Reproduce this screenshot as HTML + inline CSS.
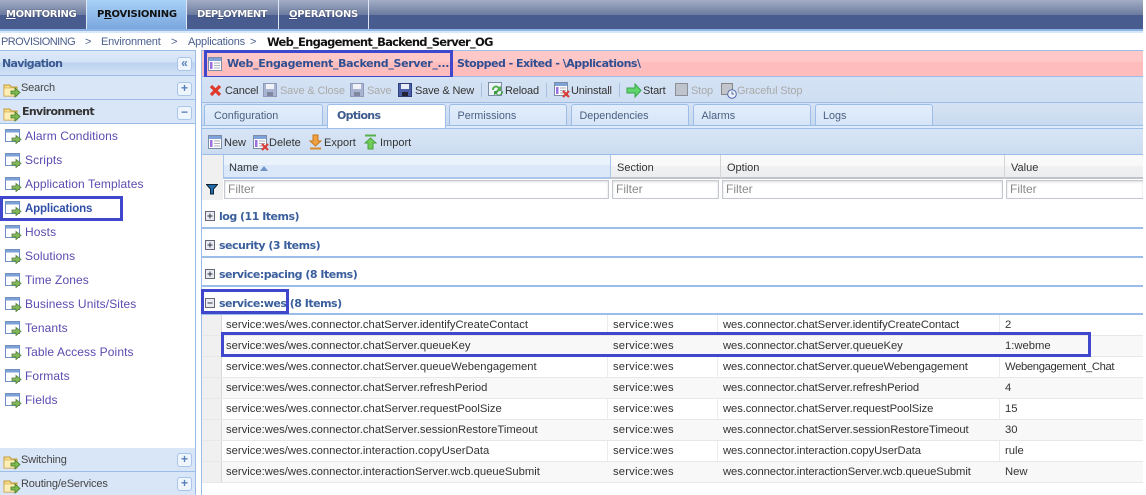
<!DOCTYPE html>
<html><head><meta charset="utf-8"><style>
html,body{margin:0;padding:0;background:#fff}
#p{position:relative;width:1146px;height:495px;overflow:hidden;background:#fff;font:11px "Liberation Sans",sans-serif;color:#333}
#p div,#p span.a,#p svg{position:absolute}
.t{white-space:nowrap;line-height:14px}
.nt{font:bold 10px/14px "DejaVu Sans",sans-serif;color:#fff;top:8px;white-space:nowrap;letter-spacing:-.35px;text-shadow:0 0 1px #223}
.tb{font-size:11px;letter-spacing:-.15px;color:#333;white-space:nowrap;line-height:14px;top:84px}
.dis{color:#aaa}
.bc{top:35px;font-size:11px;color:#4a5f8c;letter-spacing:-.2px}
.tab{top:104px;height:21px;width:118px;box-sizing:border-box;border:1px solid #9cbde8;border-bottom:0;border-radius:3px 3px 0 0;background:linear-gradient(#e3eefb,#d6e5f8);color:#4a6080;padding:4px 0 0 7.500px;line-height:14px;font-size:10.800px}
.hd{top:161px;line-height:14px;font-size:11px;color:#333}
.f{top:180px;height:19px;box-sizing:border-box;border:1px solid #c4c8d0;background:#fff;color:#888;font-size:12px;line-height:17px;padding-left:3px;box-shadow:inset 0 1px 2px #ddd}
.g{left:219px;font:bold 11px/14px "DejaVu Sans",sans-serif;color:#3a5f9c;white-space:nowrap;letter-spacing:-.5px}
.gl{left:202px;width:941px;height:2px;background:#9cbde8}
.pm{left:205px;width:10px;height:10px}
.r{left:202px;width:941px;height:1px;background:#e8e8e8}
.c{white-space:nowrap;line-height:14px;font-size:11.25px;color:#333}
.c[style*="left:723px"]{letter-spacing:-.09px}
.c[style*="left:613px"]{letter-spacing:.18px}
.nv{left:25px;font-size:12px;letter-spacing:.1px;line-height:14px;color:#5a4bb0;white-space:nowrap}
.bx{border:3px solid #3f48cc;box-sizing:border-box}
.btn{left:177px;width:13px;height:12px;border:1px solid #a9c5ea;border-radius:3px;background:#eef5fd;color:#5a80b8;font:bold 12px/11px "Liberation Sans",sans-serif;text-align:center}
.fo{left:3px;width:18px;height:17px}
.wi{left:5px;width:17px;height:15px}
.n2{font-size:11px;letter-spacing:-.15px;color:#444}
</style></head><body><div id="p">
<svg width="0" height="0" style="left:0;top:0"><defs>
<symbol id="fol" viewBox="0 0 18 17"><path d="M1 3h6l1 2h6v9H1z" fill="#f7dc8a" stroke="#c49a3a"/><path d="M1 6h13v8H1z" fill="#fdeeb5" stroke="#c49a3a" stroke-width=".6"/><path d="M8 9h4V6l5 4.500-5 4.500v-3H8z" fill="#7db850" stroke="#3f7d25" stroke-width=".8"/></symbol>
<symbol id="win" viewBox="0 0 17 15"><rect x=".5" y=".5" width="14" height="12" fill="#fff" stroke="#6d8fc4"/><rect x="1" y="1" width="13" height="2.5" fill="#7ea2d8"/><path d="M7 9h4V6.500L16 10.500l-5 4V12H7z" fill="#86b85f" stroke="#4c7f2e" stroke-width=".8"/></symbol>
<symbol id="doc" viewBox="0 0 14 14"><rect x=".5" y=".5" width="13" height="13" fill="#fff" stroke="#7a8ca8"/><rect x="1" y="1" width="12" height="3" fill="#7ea2d8"/><rect x="2" y="5" width="2.500" height="7" fill="#9a6fe0"/><path d="M6 6h6M6 8.500h6M6 11h6" stroke="#aab" /></symbol>
<symbol id="sav" viewBox="0 0 14 14"><path d="M.5.5h13v13H.5z" fill="#4a5fa8" stroke="#2f3f78"/><rect x="3" y="1" width="8" height="5" fill="#e8edf8"/><rect x="4" y="9" width="6" height="4" fill="#223"/></symbol>
<symbol id="savd" viewBox="0 0 14 14"><path d="M.5.5h13v13H.5z" fill="#a9b4d2" stroke="#8f9abb"/><rect x="3" y="1" width="8" height="5" fill="#f0f2f8"/><rect x="4" y="9" width="6" height="4" fill="#8088a0"/></symbol>
<symbol id="pl" viewBox="0 0 10 10"><rect x=".5" y=".5" width="9" height="9" fill="#e8ecf2" stroke="#667"/><path d="M2.500 5h5M5 2.500v5" stroke="#334"/></symbol>
<symbol id="mi" viewBox="0 0 10 10"><rect x=".5" y=".5" width="9" height="9" fill="#e8ecf2" stroke="#667"/><path d="M2.500 5h5" stroke="#334"/></symbol>
</defs></svg>

<!-- top bar -->
<div style="left:0;top:0;width:1143px;height:15px;background:linear-gradient(#a3adc4,#6b7a9f)"></div>
<div style="left:0;top:15px;width:1143px;height:14px;background:#485c90"></div>
<div style="left:0;top:29px;width:1143px;height:2px;background:#8fb4e6"></div>
<div style="left:0;top:31px;width:1143px;height:2px;background:#d8e8fb"></div>
<div style="left:87px;top:0;width:99px;height:29px;background:linear-gradient(#a9d2f8,#79a6dd)"></div>
<div style="left:86px;top:0;width:1px;height:29px;background:#dfe7f5"></div>
<div style="left:186px;top:0;width:1px;height:29px;background:#dfe7f5"></div>
<div style="left:278px;top:0;width:1px;height:29px;background:#dfe7f5"></div>
<div style="left:368px;top:0;width:1px;height:29px;background:#dfe7f5"></div>
<div class="nt" style="left:6px"><u>M</u>ONITORING</div>
<div class="nt" style="left:97px;color:#111;text-shadow:none;letter-spacing:-.25px">P<u>R</u>OVISIONING</div>
<div class="nt" style="left:197px;letter-spacing:-.6px">DEP<u>L</u>OYMENT</div>
<div class="nt" style="left:289px;letter-spacing:-.3px"><u>O</u>PERATIONS</div>

<!-- breadcrumb -->
<div class="t bc" style="left:1px;letter-spacing:-.55px">PROVISIONING</div>
<div class="t bc" style="left:85px">&gt;</div>
<div class="t bc" style="left:101px">Environment</div>
<div class="t bc" style="left:171px">&gt;</div>
<div class="t bc" style="left:188px">Applications</div>
<div class="t bc" style="left:250px">&gt;</div>
<div class="t" style="left:267px;top:35px;font:bold 11.500px/14px 'DejaVu Sans',sans-serif;color:#111;letter-spacing:-.75px">Web_Engagement_Backend_Server_OG</div>

<!-- nav -->
<div style="left:0;top:50px;width:196px;height:1px;background:#9cbde8"></div>
<div style="left:0;top:51px;width:195px;height:24px;background:linear-gradient(#dde9f9 0,#d4e3f7 45%,#bcd2f0 50%,#d3e2f6 100%)"></div>
<div class="t" style="left:2px;top:57px;font:bold 11px/14px 'DejaVu Sans',sans-serif;color:#3a5a90;letter-spacing:-.7px">Navigation</div>
<div class="btn" style="top:57px">«</div>
<div style="left:0;top:75px;width:195px;height:1px;background:#9cbde8"></div>
<div style="left:0;top:76px;width:195px;height:23px;background:#d9e6f7"></div>
<svg class="fo" style="top:82px"><use href="#fol"/></svg>
<div class="t n2" style="left:21px;top:81px">Search</div>
<div class="btn" style="top:82px">+</div>
<div style="left:0;top:99px;width:195px;height:1px;background:#9cbde8"></div>
<div style="left:0;top:100px;width:195px;height:23px;background:#d9e6f7"></div>
<svg class="fo" style="top:106px"><use href="#fol"/></svg>
<div class="t" style="left:22px;top:105px;font:bold 11px/14px 'DejaVu Sans',sans-serif;color:#333;letter-spacing:-.65px">Environment</div>
<div class="btn" style="top:106px">−</div>
<div style="left:0;top:123px;width:195px;height:1px;background:#9cbde8"></div>

<svg class="wi" style="top:129px"><use href="#win"/></svg><div class="nv" style="top:129px">Alarm Conditions</div>
<svg class="wi" style="top:153px"><use href="#win"/></svg><div class="nv" style="top:153px">Scripts</div>
<svg class="wi" style="top:177px"><use href="#win"/></svg><div class="nv" style="top:177px">Application Templates</div>
<svg class="wi" style="top:201px"><use href="#win"/></svg><div class="nv" style="top:202px;font-weight:bold;color:#2f4fa8;font-size:11.500px;letter-spacing:-.15px">Applications</div>
<svg class="wi" style="top:225px"><use href="#win"/></svg><div class="nv" style="top:225px">Hosts</div>
<svg class="wi" style="top:249px"><use href="#win"/></svg><div class="nv" style="top:249px">Solutions</div>
<svg class="wi" style="top:273px"><use href="#win"/></svg><div class="nv" style="top:273px">Time Zones</div>
<svg class="wi" style="top:297px"><use href="#win"/></svg><div class="nv" style="top:297px">Business Units/Sites</div>
<svg class="wi" style="top:321px"><use href="#win"/></svg><div class="nv" style="top:321px">Tenants</div>
<svg class="wi" style="top:345px"><use href="#win"/></svg><div class="nv" style="top:345px">Table Access Points</div>
<svg class="wi" style="top:369px"><use href="#win"/></svg><div class="nv" style="top:369px">Formats</div>
<svg class="wi" style="top:393px"><use href="#win"/></svg><div class="nv" style="top:393px">Fields</div>
<div class="bx" style="left:0;top:196px;width:123px;height:25px"></div>

<div style="left:0;top:448px;width:195px;height:23px;background:#d9e6f7"></div>
<svg class="fo" style="top:454px"><use href="#fol"/></svg>
<div class="t n2" style="left:21px;top:453px">Switching</div>
<div class="btn" style="top:453px">+</div>
<div style="left:0;top:471px;width:195px;height:1px;background:#9cbde8"></div>
<div style="left:0;top:472px;width:195px;height:23px;background:#d9e6f7"></div>
<svg class="fo" style="top:478px"><use href="#fol"/></svg>
<div class="t n2" style="left:21px;top:477px">Routing/eServices</div>
<div class="btn" style="top:477px">+</div>
<div style="left:195px;top:50px;width:1px;height:445px;background:#9cbde8"></div>
<div style="left:201px;top:50px;width:1px;height:445px;background:#9cbde8"></div>

<!-- title bar -->
<div style="left:202px;top:50px;width:941px;height:1px;background:#9cbde8"></div>
<div style="left:202px;top:51px;width:941px;height:11px;background:#ffc8c8"></div>
<div style="left:202px;top:62px;width:941px;height:14px;background:#ffbcbc"></div>
<div style="left:202px;top:76px;width:941px;height:1px;background:#9cbde8"></div>
<svg style="left:208px;top:57px" width="14" height="14"><use href="#doc"/></svg>
<div class="t" style="left:227px;top:57px;font:bold 11px/14px 'DejaVu Sans',sans-serif;color:#2f4f92;letter-spacing:-.33px">Web_Engagement_Backend_Server_...</div>
<div class="t" style="left:457px;top:57px;font:bold 11px/14px 'DejaVu Sans',sans-serif;color:#2f4f92;letter-spacing:-.5px">Stopped - Exited - \Applications\</div>
<div class="bx" style="left:204px;top:50px;width:249px;height:29px"></div>

<!-- toolbar -->
<div style="left:202px;top:77px;width:941px;height:25px;background:linear-gradient(#d4e2f4,#cfdef1)"></div>
<div style="left:202px;top:102px;width:941px;height:1px;background:#9cbde8"></div>
<svg style="left:209px;top:84px" width="13" height="13"><path d="M2 2l9 9M11 2l-9 9" stroke="#e03a2a" stroke-width="3.200"/></svg>
<div class="tb" style="left:225px">Cancel</div>
<svg style="left:263px;top:83px" width="14" height="14"><use href="#savd"/></svg>
<div class="tb dis" style="left:280px">Save &amp; Close</div>
<svg style="left:350px;top:83px" width="14" height="14"><use href="#savd"/></svg>
<div class="tb dis" style="left:367px">Save</div>
<svg style="left:398px;top:83px" width="14" height="14"><use href="#sav"/></svg>
<div class="tb" style="left:415px">Save &amp; New</div>
<div style="left:481px;top:83px;width:1px;height:14px;background:#a8c0e0"></div>
<svg style="left:488px;top:82px" width="16" height="15"><rect x=".5" y=".5" width="13" height="13" fill="#eef3fb" stroke="#7a8ca8"/><path d="M4 8a4 4 0 0 1 7-3l2-1v5H8l2-2a2 2 0 0 0-4 1z" fill="#4fae4a"/><path d="M15 9a4 4 0 0 1-7 3l-2 1V9h5l-2 2a2 2 0 0 0 4-1z" fill="#3f9a3f"/></svg>
<div class="tb" style="left:505px">Reload</div>
<div style="left:546px;top:83px;width:1px;height:14px;background:#a8c0e0"></div>
<svg style="left:554px;top:82px" width="16" height="16"><use href="#doc" width="14" height="14"/><path d="M9 9l6 6M15 9l-6 6" stroke="#d8403a" stroke-width="2.200"/></svg>
<div class="tb" style="left:571px">Uninstall</div>
<div style="left:619px;top:83px;width:1px;height:14px;background:#a8c0e0"></div>
<svg style="left:626px;top:83px" width="16" height="15"><path d="M1 5h8V1l6 6.500-6 6.500v-4H1z" fill="#62d46c" stroke="#36a648"/></svg>
<div class="tb" style="left:643px">Start</div>
<svg style="left:675px;top:83px" width="13" height="13"><rect x=".5" y=".5" width="12" height="12" fill="#bfc4cc" stroke="#8a8f98"/></svg>
<div class="tb dis" style="left:691px">Stop</div>
<svg style="left:721px;top:83px" width="16" height="16"><rect x=".5" y=".5" width="11" height="11" fill="#c2c6cc" stroke="#888"/><circle cx="11" cy="11" r="4.300" fill="#eef2fa" stroke="#5468a8"/><path d="M11 8.500V11h2" stroke="#5468a8" fill="none"/></svg>
<div class="tb dis" style="left:737px">Graceful Stop</div>

<!-- tabs -->
<div style="left:202px;top:103px;width:941px;height:22px;background:linear-gradient(#d6e3f4,#c9daef)"></div>
<div style="left:202px;top:125px;width:941px;height:1px;background:#9cbde8"></div>
<div style="left:202px;top:126px;width:941px;height:2px;background:#dfeafa"></div>
<div style="left:202px;top:128px;width:941px;height:1px;background:#9cbde8"></div>
<div class="tab" style="left:204px;width:119px;padding-left:9px">Configuration</div>
<div class="tab" style="left:327px;width:119px;height:24px;background:#fff;color:#3d5a8a;padding-left:9px;font:bold 11px/14px 'DejaVu Sans',sans-serif;letter-spacing:-.7px">Options</div>
<div class="tab" style="left:449px">Permissions</div>
<div class="tab" style="left:571px">Dependencies</div>
<div class="tab" style="left:693px">Alarms</div>
<div class="tab" style="left:815px;padding-left:7px">Logs</div>

<!-- toolbar 2 -->
<div style="left:202px;top:129px;width:941px;height:25px;background:linear-gradient(#d8e5f6,#ccdcf0)"></div>
<div style="left:202px;top:154px;width:941px;height:1px;background:#9cbde8"></div>
<svg style="left:208px;top:135px" width="14" height="14"><use href="#doc"/></svg>
<div class="t" style="left:224px;top:136px;color:#333">New</div>
<svg style="left:253px;top:135px" width="16" height="16"><use href="#doc" width="14" height="14"/><path d="M9 9l6 6M15 9l-6 6" stroke="#d8403a" stroke-width="2.200"/></svg>
<div class="t" style="left:269px;top:136px;color:#333">Delete</div>
<svg style="left:309px;top:134px" width="13" height="16"><path d="M4 1h5v6h3l-5.500 5L1 7h3z" fill="#f0a040" stroke="#c87818"/><path d="M1 14.500h11" stroke="#d88a28" stroke-width="2"/></svg>
<div class="t" style="left:324px;top:136px;color:#333">Export</div>
<svg style="left:364px;top:134px" width="13" height="16"><path d="M1 1.500h11" stroke="#5ab04a" stroke-width="2"/><path d="M4 15h5V9h3L6.500 4 1 9h3z" fill="#72cc58" stroke="#46a040"/></svg>
<div class="t" style="left:380px;top:136px;color:#333">Import</div>

<!-- grid header -->
<div style="left:202px;top:155px;width:941px;height:11px;background:#f9f9f9"></div>
<div style="left:202px;top:166px;width:941px;height:11px;background:linear-gradient(#f0f1f3,#ecedef)"></div>
<div style="left:202px;top:177px;width:941px;height:2px;background:#c0c3c8"></div>
<div style="left:202px;top:155px;width:21px;height:24px;background:#f0f0f0"></div>
<div style="left:223px;top:155px;width:388px;height:10px;background:#eaf2fc"></div>
<div style="left:223px;top:165px;width:388px;height:12px;background:#dae8f9"></div>
<div style="left:223px;top:177px;width:388px;height:2px;background:#a9c5ea"></div>
<div style="left:223px;top:155px;width:1px;height:24px;background:#a9c5ea"></div>
<div style="left:610px;top:155px;width:1px;height:24px;background:#a9c5ea"></div>
<div style="left:720px;top:155px;width:1px;height:24px;background:#d4d4d4"></div>
<div style="left:1004px;top:155px;width:1px;height:24px;background:#d4d4d4"></div>
<div class="hd" style="left:229px">Name</div>
<svg style="left:260px;top:166px" width="8" height="5"><path d="M0 5L4 0l4 5z" fill="#6f94c8"/></svg>
<div class="hd" style="left:617px">Section</div>
<div class="hd" style="left:727px">Option</div>
<div class="hd" style="left:1011px">Value</div>

<!-- filter -->
<div style="left:202px;top:179px;width:21px;height:21px;background:#f0f0f0"></div>
<svg style="left:206px;top:184px" width="12" height="11"><path d="M.5.500h11L7.500 5v5h-3V5z" fill="#1f6fb0" stroke="#123"/></svg>
<div class="f" style="left:224px;width:385px">Filter</div>
<div class="f" style="left:612px;width:107px">Filter</div>
<div class="f" style="left:722px;width:281px">Filter</div>
<div class="f" style="left:1006px;width:137px;border-right:0">Filter</div>

<!-- groups -->
<svg class="pm" style="top:211px"><use href="#pl"/></svg>
<div class="g" style="top:210px">log (11 Items)</div><div class="gl" style="top:227px"></div>
<svg class="pm" style="top:240px"><use href="#pl"/></svg>
<div class="g" style="top:239px">security (3 Items)</div><div class="gl" style="top:256px"></div>
<svg class="pm" style="top:269px"><use href="#pl"/></svg>
<div class="g" style="top:268px">service:pacing (8 Items)</div><div class="gl" style="top:285px"></div>
<svg class="pm" style="top:298px"><use href="#mi"/></svg>
<div class="g" style="top:297px">service:wes (8 Items)</div><div class="gl" style="top:313px"></div>
<div class="bx" style="left:201px;top:289px;width:88px;height:25px"></div>

<!-- rows -->
<div style="left:202px;top:315px;width:19px;height:168px;background:#f0f0f0"></div>
<div style="left:221px;top:315px;width:1px;height:168px;background:#d8d8d8"></div>
<div style="left:607px;top:315px;width:1px;height:168px;background:#ececec"></div>
<div style="left:717px;top:315px;width:1px;height:168px;background:#ececec"></div>
<div style="left:999px;top:315px;width:1px;height:168px;background:#ececec"></div>
<div style="left:222px;top:336px;width:921px;height:20px;background:#f8f8f8"></div>
<div style="left:222px;top:378px;width:921px;height:20px;background:#f8f8f8"></div>
<div style="left:222px;top:420px;width:921px;height:20px;background:#f8f8f8"></div>
<div style="left:222px;top:462px;width:921px;height:20px;background:#f8f8f8"></div>
<div class="r" style="top:335px"></div><div class="r" style="top:356px"></div><div class="r" style="top:377px"></div><div class="r" style="top:398px"></div><div class="r" style="top:419px"></div><div class="r" style="top:440px"></div><div class="r" style="top:461px"></div><div class="r" style="top:482px"></div>

<div class="c" style="left:226px;top:318px">service:wes/wes.connector.chatServer.identifyCreateContact</div><div class="c" style="left:613px;top:318px">service:wes</div><div class="c" style="left:723px;top:318px">wes.connector.chatServer.identifyCreateContact</div><div class="c" style="left:1005px;top:318px">2</div>
<div class="c" style="left:226px;top:339px">service:wes/wes.connector.chatServer.queueKey</div><div class="c" style="left:613px;top:339px">service:wes</div><div class="c" style="left:723px;top:339px">wes.connector.chatServer.queueKey</div><div class="c" style="left:1005px;top:339px">1:webme</div>
<div class="c" style="left:226px;top:360px">service:wes/wes.connector.chatServer.queueWebengagement</div><div class="c" style="left:613px;top:360px">service:wes</div><div class="c" style="left:723px;top:360px">wes.connector.chatServer.queueWebengagement</div><div class="c" style="left:1005px;top:360px;letter-spacing:-.35px">Webengagement_Chat</div>
<div class="c" style="left:226px;top:381px">service:wes/wes.connector.chatServer.refreshPeriod</div><div class="c" style="left:613px;top:381px">service:wes</div><div class="c" style="left:723px;top:381px">wes.connector.chatServer.refreshPeriod</div><div class="c" style="left:1005px;top:381px">4</div>
<div class="c" style="left:226px;top:402px">service:wes/wes.connector.chatServer.requestPoolSize</div><div class="c" style="left:613px;top:402px">service:wes</div><div class="c" style="left:723px;top:402px">wes.connector.chatServer.requestPoolSize</div><div class="c" style="left:1005px;top:402px">15</div>
<div class="c" style="left:226px;top:423px">service:wes/wes.connector.chatServer.sessionRestoreTimeout</div><div class="c" style="left:613px;top:423px">service:wes</div><div class="c" style="left:723px;top:423px">wes.connector.chatServer.sessionRestoreTimeout</div><div class="c" style="left:1005px;top:423px">30</div>
<div class="c" style="left:226px;top:444px">service:wes/wes.connector.interaction.copyUserData</div><div class="c" style="left:613px;top:444px">service:wes</div><div class="c" style="left:723px;top:444px">wes.connector.interaction.copyUserData</div><div class="c" style="left:1005px;top:444px">rule</div>
<div class="c" style="left:226px;top:465px">service:wes/wes.connector.interactionServer.wcb.queueSubmit</div><div class="c" style="left:613px;top:465px">service:wes</div><div class="c" style="left:723px;top:465px">wes.connector.interactionServer.wcb.queueSubmit</div><div class="c" style="left:1005px;top:465px">New</div>
<div class="bx" style="left:221px;top:332px;width:870px;height:25px"></div>
</div></body></html>
